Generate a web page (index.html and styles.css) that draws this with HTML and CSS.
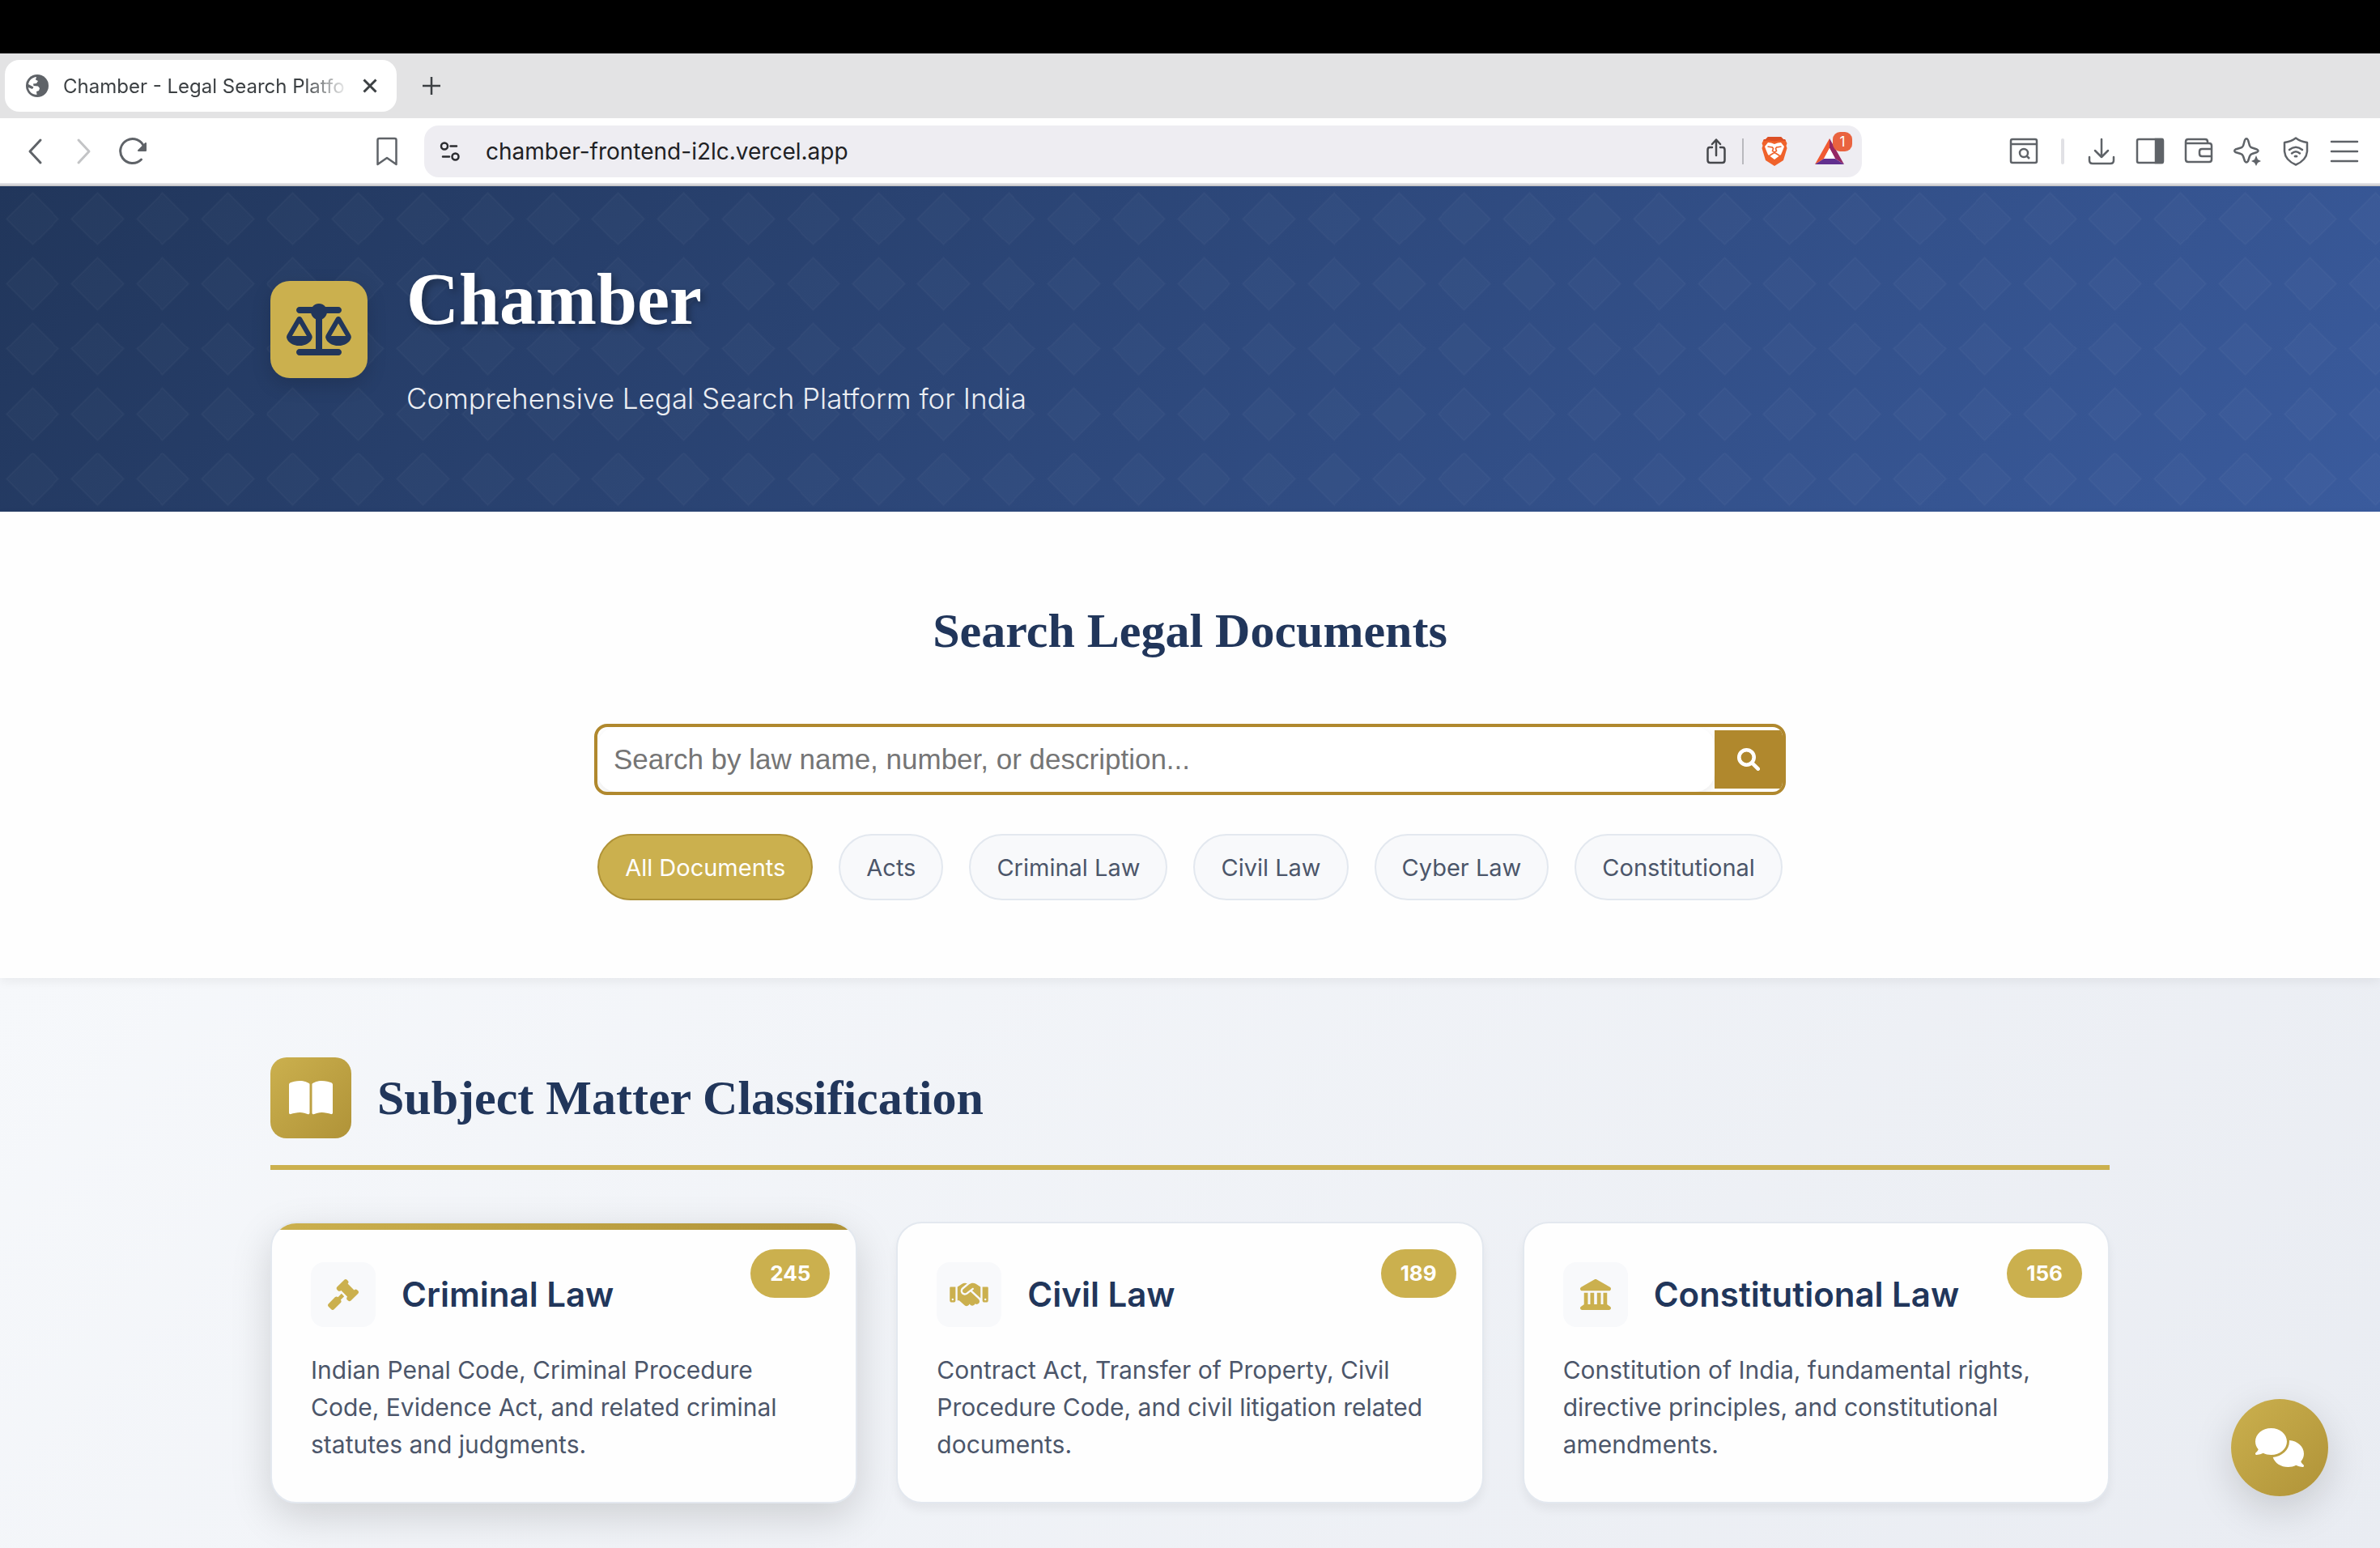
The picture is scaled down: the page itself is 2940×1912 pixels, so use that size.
FILE: index.html
```html
<!DOCTYPE html>
<html lang="en">
<head>
<meta charset="utf-8">
<title>Chamber - Legal Search Platform</title>
<link rel="stylesheet" href="styles.css">
</head>
<body>
<div class="browser">
  <div class="menu-strip"></div>
  <div class="tab-strip">
    <div class="tab">
      <svg class="tab-globe" viewBox="0 0 28 28"><circle cx="14" cy="14" r="14" fill="#5f6368"/><path d="M3 12C4 7 8 3.500 13 3L12 6.500L15 8L13 11L9 11.500L9.500 14L15 14.500L17 17L16 20L13 21L13.500 25C8 25 3.500 21 3 16L8 18L9.500 15.500Z" fill="#fff"/><path d="M18 4C22 6 25 9.500 25 14C25 16 24 19 22 21L21 17.500L18.500 15.500L18 12L21.500 11.500L21 8.500L18 7.500Z" fill="#5f6368"/></svg>
      <span class="tab-title">Chamber - Legal Search Platfo</span>
      <button class="bare tab-close" aria-label="Close tab"><svg viewBox="0 0 18 18" width="18" height="18" fill="none" stroke="#3c4043" stroke-width="3"><path d="M1.500 1.500L16.500 16.500M16.500 1.500L1.500 16.500"/></svg></button>
    </div>
    <button class="bare new-tab" aria-label="New tab"><svg viewBox="0 0 22 22" width="22" height="22" fill="none" stroke="#3c4043" stroke-width="2.500"><path d="M11 0V22M0 11H22"/></svg></button>
  </div>
  <div class="toolbar">
    <div class="nav-tools">
      <button class="bare tool" aria-label="Back"><svg viewBox="0 0 36 36" fill="none" stroke="#5f6368" stroke-width="3" stroke-linecap="round" stroke-linejoin="round"><path d="M24 4L11 18L24 32"/></svg></button>
      <button class="bare tool" aria-label="Forward"><svg viewBox="0 0 36 36" fill="none" stroke="#c3c4c6" stroke-width="3" stroke-linecap="round" stroke-linejoin="round"><path d="M11 4L24 18L11 32"/></svg></button>
      <button class="bare tool" aria-label="Reload"><svg viewBox="0 0 36 36" fill="none" stroke="#5f6368" stroke-width="3" stroke-linecap="round"><path d="M28.500 28A15 15 0 1 1 32 13"/><path d="M34 8V17H25Z" fill="#5f6368" stroke-width="2" stroke-linejoin="round"/></svg></button>
      <button class="bare tool bookmark" aria-label="Bookmark"><svg viewBox="0 0 36 36" fill="none" stroke="#5f6368" stroke-width="2.500" stroke-linejoin="round"><path d="M6.500 34V4Q6.500 2 8.500 2H27.500Q29.500 2 29.500 4V34L18 26Z"/></svg></button>
    </div>
    <div class="address">
      <svg class="tune" viewBox="0 0 26 26" fill="none" stroke="#2b2c30" stroke-width="2.500" stroke-linecap="round"><circle cx="6" cy="6.500" r="4"/><path d="M13.500 6.500H21M4 19.500H12"/><circle cx="19.500" cy="19.500" r="4"/></svg>
      <input class="url" aria-label="Address" value="chamber-frontend-i2lc.vercel.app">
      <button class="bare share" aria-label="Share"><svg viewBox="0 0 24 32" width="24" height="32" fill="none" stroke="#46484c" stroke-width="2.500" stroke-linecap="round" stroke-linejoin="round"><path d="M7 11H4Q1.500 11 1.500 14V27Q1.500 30 4.500 30H19.500Q22.500 30 22.500 27V14Q22.500 11 20 11H17M12 21V2M7 7L12 1.500L17 7"/></svg></button>
      <span class="divider"></span>
      <button class="bare" aria-label="Shields"><svg viewBox="0 0 32 36" width="32" height="36"><path d="M8 0H24L27 3L29 3L31.500 8L30.500 11L31.500 14L27 29L16 36L5 29L.5 14L1.500 11L.5 8L3 3L5 3Z" fill="#f0622b"/><path d="M8 0H24L27 3L29 3L30 5L22 4.500L16 5.500L10 4.500L2 5L3 3L5 3Z" fill="#dc4f25"/><path d="M8 7L12 7.500L16 9L20 7.500L24 7L28 12L26.500 16L24 22L16 28L8 22L5.500 16L4 12Z" fill="#fff"/><path d="M7.500 12L13.500 13L14.500 14.500L13.500 17.500L16 19L18.500 17.500L17.500 14.500L18.500 13L24.500 12M9.500 23.500L12.500 21.500L16 19.500L19.500 21.500L22.500 23.500" fill="none" stroke="#f0622b" stroke-width="1.600"/></svg></button>
      <button class="bare rewards" aria-label="Rewards"><svg viewBox="0 0 36 32" width="36" height="32"><path d="M18 0L0 32L11 25L18 12Z" fill="#f15a33"/><path d="M18 0L36 32L25 25L18 12Z" fill="#952763"/><path d="M0 32H36L25 25H11Z" fill="#62308f"/><path d="M18 12L25 25H11Z" fill="#fff"/></svg><span class="rewards-count">1</span></button>
    </div>
    <div class="side-tools">
      <button class="bare tool" aria-label="Search tabs"><svg viewBox="0 0 36 36" fill="none" stroke="#5f6368" stroke-width="2.500"><rect x="2" y="3" width="32" height="29" rx="2"/><path d="M2 9H34"/><circle cx="18" cy="20" r="5"/><path d="M21.500 23.500L25 27"/></svg></button>
      <span class="tool-divider"></span>
      <button class="bare tool" aria-label="Downloads"><svg viewBox="0 0 36 36" fill="none" stroke="#5f6368" stroke-width="2.500" stroke-linecap="round" stroke-linejoin="round"><path d="M18 3V25M10 17L18 25L26 17M3 25V29Q3 33 7 33H29Q33 33 33 29V25"/></svg></button>
      <button class="bare tool" aria-label="Sidebar"><svg viewBox="0 0 36 36" fill="none" stroke="#5f6368" stroke-width="2.500"><rect x="2" y="3" width="32" height="29" rx="2"/><path d="M25 3H33V32H25Z" fill="#5f6368"/></svg></button>
      <button class="bare tool" aria-label="Wallet"><svg viewBox="0 0 36 36" fill="none" stroke="#5f6368" stroke-width="2.500" stroke-linejoin="round"><path d="M29 8V6Q29 3 26 3H5Q2 3 2 6V28Q2 31 5 31H31Q34 31 34 28V11Q34 8 31 8H2M34 15H22Q19 15 19 18V21Q19 24 22 24H34"/></svg></button>
      <button class="bare tool" aria-label="Assistant"><svg viewBox="0 0 36 36" fill="none" stroke="#5f6368" stroke-width="2.500" stroke-linejoin="round"><path d="M15 4Q17 .5 19 4L21 11Q22 13 24 13.500L30 15.500Q33 17 30 19L24 21Q22 21.500 21 24L19 30Q17 33 15 30L13 24Q12 21.500 10 21L3.500 19Q1 17 3.500 15.500L10 13.500Q12 13 13 11Z"/><path d="M29 23L31 28L35 30L31 32L29 36L27 32L23 30L27 28Z" fill="#5f6368" stroke="none"/></svg></button>
      <button class="bare tool" aria-label="VPN"><svg viewBox="0 0 36 36" fill="none" stroke="#5f6368" stroke-width="2.500" stroke-linejoin="round"><path d="M18 1.500Q24 6 32 7V18Q31 29 18 34.500Q5 29 4 18V7Q12 6 18 1.500Z"/><path d="M10 16Q18 9.500 26 16M13 20.500Q18 16 23 20.500" stroke-linecap="round"/><ellipse cx="18" cy="24" rx="2.500" ry="1.500" fill="#5f6368" stroke="none"/></svg></button>
      <button class="bare tool" aria-label="Menu"><svg viewBox="0 0 36 36" fill="none" stroke="#5f6368" stroke-width="2.500" stroke-linecap="round"><path d="M2 6H34M2 18H34M2 30H34"/></svg></button>
    </div>
  </div>
</div>

<header class="hero">
  <div class="container hero-inner">
    <div class="logo"><svg viewBox="0 0 640 512" width="80" height="64" fill="#21365b"><path d="M384 32l128 0c17.700 0 32 14.300 32 32s-14.300 32-32 32L398.400 96c-5.200 25.800-22.900 47.100-46.400 57.300L352 448l160 0c17.700 0 32 14.300 32 32s-14.300 32-32 32l-192 0-192 0c-17.700 0-32-14.300-32-32s14.300-32 32-32l160 0 0-294.700c-23.500-10.300-41.200-31.600-46.400-57.300L128 96c-17.700 0-32-14.300-32-32s14.300-32 32-32l128 0c14.600-19.400 37.800-32 64-32s49.400 12.600 64 32zm55.600 288l144.900 0L512 195.800 439.600 320zM512 416c-62.900 0-115.200-34-126-78.900c-2.600-11 1-22.300 6.700-32.100l95.200-163.200c5-8.600 14.200-13.800 24.100-13.800s19.100 5.300 24.100 13.800l95.200 163.200c5.700 9.800 9.300 21.100 6.700 32.100C627.200 382 574.900 416 512 416zM126.800 195.800L54.400 320l144.900 0L126.800 195.800zM.9 337.100c-2.600-11 1-22.300 6.700-32.100l95.200-163.200c5-8.600 14.200-13.800 24.100-13.800s19.100 5.300 24.100 13.800l95.200 163.200c5.700 9.800 9.300 21.100 6.700 32.100C242 382 189.700 416 126.800 416S11.700 382 .9 337.100z"/></svg></div>
    <div class="hero-text">
      <h1>Chamber</h1>
      <p>Comprehensive Legal Search Platform for India</p>
    </div>
  </div>
</header>

<section class="search">
  <h2>Search Legal Documents</h2>
  <form class="search-box">
    <input class="search-input" type="text" aria-label="Search" placeholder="Search by law name, number, or description...">
    <button class="search-button" type="button" aria-label="Search"><svg viewBox="-12 -12 536 536" width="28" height="28" fill="#fff" stroke="#fff" stroke-width="24"><path d="M416 208c0 45.900-14.900 88.300-40 122.700L502.600 457.400c12.500 12.500 12.500 32.800 0 45.300s-32.800 12.500-45.300 0L330.700 376c-34.400 25.200-76.800 40-122.700 40C93.100 416 0 322.900 0 208S93.100 0 208 0S416 93.100 416 208zM208 352a144 144 0 1 0 0-288 144 144 0 1 0 0 288z"/></svg></button>
  </form>
  <div class="filters">
    <button class="filter active">All Documents</button>
    <button class="filter">Acts</button>
    <button class="filter">Criminal Law</button>
    <button class="filter">Civil Law</button>
    <button class="filter">Cyber Law</button>
    <button class="filter">Constitutional</button>
  </div>
</section>

<main>
  <div class="container">
    <div class="section-head">
      <div class="section-icon"><svg viewBox="0 0 576 512" width="54" height="48" fill="#fff"><path d="M249.600 471.500c10.800 3.800 22.400-4.100 22.400-15.500l0-377.400c0-4.200-1.600-8.400-5-11C247.400 52 202.400 32 144 32C93.500 32 46.300 45.300 18.100 56.100C6.800 60.500 0 71.700 0 83.800L0 454.100c0 11.900 12.800 20.200 24.100 16.500C55.600 460.100 105.500 448 144 448c33.900 0 79 14 105.600 23.500zm76.800 0C353 462 398.100 448 432 448c38.500 0 88.400 12.100 119.900 22.600c11.300 3.800 24.100-4.600 24.100-16.500l0-370.300c0-12.100-6.800-23.300-18.100-27.600C529.700 45.300 482.500 32 432 32c-58.400 0-103.400 20-123 35.600c-3.300 2.600-5 6.800-5 11L304 456c0 11.400 11.700 19.300 22.400 15.500z"/></svg></div>
      <h2>Subject Matter Classification</h2>
    </div>
    <div class="cards">
      <article class="card raised">
        <span class="count">245</span>
        <div class="card-head">
          <div class="card-icon"><svg viewBox="0 0 512 512" width="38" height="38"><path d="M318.600 9.400c-12.500-12.500-32.800-12.500-45.300 0l-120 120c-12.500 12.500-12.500 32.800 0 45.300l16 16c12.500 12.500 32.800 12.500 45.300 0l4-4L325.400 293.400l-4 4c-12.500 12.500-12.500 32.800 0 45.300l16 16c12.500 12.500 32.800 12.500 45.300 0l120-120c12.500-12.500 12.500-32.800 0-45.300l-16-16c-12.500-12.500-32.800-12.500-45.300 0l-4 4L330.600 74.600l4-4c12.500-12.500 12.500-32.800 0-45.300l-16-16zm-152 288c-12.500-12.500-32.800-12.500-45.300 0l-112 112c-12.500 12.500-12.500 32.800 0 45.300l48 48c12.500 12.500 32.800 12.500 45.300 0l112-112c12.500-12.500 12.500-32.800 0-45.300l-1.400-1.400L272 285.300 226.700 240 168 298.700l-1.400-1.400z"/></svg></div>
          <h3>Criminal Law</h3>
        </div>
        <p>Indian Penal Code, Criminal Procedure Code, Evidence Act, and related criminal statutes and judgments.</p>
      </article>
      <article class="card">
        <span class="count">189</span>
        <div class="card-head">
          <div class="card-icon"><svg viewBox="0 0 640 512" width="48" height="38"><path d="M323.400 85.200l-96.800 78.400c-16.100 13-19.200 36.400-7 53.100c12.900 17.800 38 21.300 55.300 7.800l99.300-77.200c7-5.400 17-4.200 22.500 2.800s4.200 17-2.800 22.500l-20.900 16.200L512 316.800 512 128l-.7 0-3.900-2.500L434.800 79c-15.300-9.800-33.200-15-51.400-15c-21.800 0-43 7.500-60 21.200zm22.800 124.400l-51.700 40.200C263 274.300 217.300 268 193.700 235.600c-22.200-30.500-16.600-73.100 12.700-96.800l83.200-67.300c-11.600-4.900-24.100-7.400-36.800-7.400C234 64 215.700 69.600 200 80l-72 48 0 224 28.200 0 91.400 83.400c19.600 17.900 49.900 16.500 67.800-3.100c5.500-6.100 9.200-13.200 11.100-20.600l17 15.600c19.500 17.900 49.900 16.600 67.800-2.900c4.500-4.900 7.800-10.600 9.900-16.500c19.400 13 45.800 10.300 62.100-7.500c17.900-19.500 16.600-49.900-2.900-67.800l-134.200-123zM16 128c-8.800 0-16 7.200-16 16L0 352c0 17.700 14.300 32 32 32l32 0c17.700 0 32-14.300 32-32l0-224-80 0zM48 320a16 16 0 1 1 0 32 16 16 0 1 1 0-32zM544 128l0 224c0 17.700 14.300 32 32 32l32 0c17.700 0 32-14.300 32-32l0-208c0-8.800-7.200-16-16-16l-80 0zm32 208a16 16 0 1 1 32 0 16 16 0 1 1 -32 0z"/></svg></div>
          <h3>Civil Law</h3>
        </div>
        <p>Contract Act, Transfer of Property, Civil Procedure Code, and civil litigation related documents.</p>
      </article>
      <article class="card">
        <span class="count">156</span>
        <div class="card-head">
          <div class="card-icon"><svg viewBox="0 0 512 512" width="38" height="38"><path d="M240.100 4.200c9.800-5.600 21.900-5.600 31.800 0l171.800 98.100L448 104l0 .9 47.900 27.400c12.600 7.200 18.800 22 15.100 36s-16.400 23.800-30.900 23.800L32 192c-14.500 0-27.200-9.800-30.900-23.800s2.500-28.800 15.100-36L64 104.900l0-.9 4.400-1.600L240.100 4.200zM64 224l64 0 0 192 40 0 0-192 64 0 0 192 48 0 0-192 64 0 0 192 40 0 0-192 64 0 0 196.300c.6 .3 1.200 .7 1.800 1.100l48 32c11.700 7.800 17 22.400 12.900 35.900S494.100 512 480 512L32 512c-14.100 0-26.500-9.200-30.600-22.700s1.100-28.100 12.900-35.900l48-32c.6-.4 1.200-.7 1.800-1.100L64 224z"/></svg></div>
          <h3>Constitutional Law</h3>
        </div>
        <p>Constitution of India, fundamental rights, directive principles, and constitutional amendments.</p>
      </article>
    </div>
  </div>
</main>

<button class="chat" aria-label="Open chat"><svg viewBox="0 0 640 512" width="60" height="48" fill="#fff"><path d="M208 352c114.900 0 208-78.800 208-176S322.900 0 208 0S0 78.800 0 176c0 38.600 14.700 74.300 39.600 103.400c-3.500 9.400-8.700 17.700-14.200 24.700c-4.800 6.200-9.700 11-13.300 14.300c-1.800 1.600-3.300 2.900-4.300 3.700c-.5 .4-.9 .7-1.100 .8l-.2 .2 0 0 0 0C1 327.200-1.400 334.400 .8 340.900S9.100 352 16 352c21.800 0 43.800-5.600 62.100-12.500c9.200-3.500 17.800-7.400 25.300-11.400C134.100 343.300 169.800 352 208 352zM448 176c0 112.300-99.100 196.900-216.500 207C255.800 457.400 336.400 512 432 512c38.200 0 73.900-8.700 104.700-23.900c7.500 4 16 7.900 25.200 11.400c18.300 6.900 40.300 12.500 62.100 12.500c6.900 0 13.100-4.500 15.200-11.100c2.100-6.600-.2-13.800-5.800-17.900l0 0 0 0-.2-.2c-.2-.2-.6-.4-1.100-.8c-1-.8-2.500-2-4.300-3.700c-3.600-3.300-8.500-8.100-13.300-14.300c-5.500-7-10.700-15.400-14.200-24.700c24.900-29 39.600-64.700 39.600-103.400c0-92.800-84.900-168.900-192.600-175.500c.4 5.100 .6 10.300 .6 15.500z"/></svg></button>
</body>
</html>
```
FILE: styles.css
```css
:root {
  --navy: #21365b;
  --gold: #cbb04e;
  --gold-dark: #b09338;
  --bronze: #b0882d;
  --slate: #4c566a;
  --line: #e3e8ef;
  --mist: #f8f9fb;
  --serif: "Liberation Serif", serif;
  --sans: Inter, sans-serif;
}

* { box-sizing: border-box; }

body {
  margin: 0;
  min-height: 100vh;
  display: flex;
  flex-direction: column;
  font-family: var(--sans);
  color: var(--slate);
}

h1, h2, h3, p { margin: 0; }
svg { display: block; flex: none; }
button, input { font-family: inherit; }

.bare {
  padding: 0;
  border: 0;
  background: none;
  flex: none;
}

/* Browser frame */
.menu-strip { height: 66px; background: #000; }

.tab-strip {
  height: 80px;
  padding: 8px 6px;
  display: flex;
  align-items: center;
  gap: 32px;
  background: #e3e3e4;
}

.tab {
  width: 484px;
  height: 64px;
  padding: 0 24px 0 26px;
  display: flex;
  align-items: center;
  border-radius: 18px;
  background: #fff;
}

.tab-globe { width: 28px; height: 28px; }

.tab-title {
  flex: 1;
  margin: 0 16px 0 18px;
  white-space: nowrap;
  font-size: 24px;
  color: #3c4043;
  -webkit-mask-image: linear-gradient(90deg, #000 84%, transparent);
  mask-image: linear-gradient(90deg, #000 84%, transparent);
}

.toolbar {
  height: 84px;
  display: grid;
  grid-template-columns: 524px 1fr 640px;
  align-items: center;
  background: #fff;
  border-bottom: 2px solid #c9c9cb;
  box-shadow: inset 0 -2px #e1e1e5;
}

.nav-tools, .side-tools { display: flex; align-items: center; }
.nav-tools { padding-left: 14px; }
.side-tools { padding-right: 14px; justify-content: flex-end; }

.tool { width: 60px; display: flex; justify-content: center; }
.tool svg { width: 36px; height: 36px; }
.bookmark { margin-left: auto; margin-right: 16px; }
.tool-divider { width: 4px; height: 32px; margin: 0 16px; border-radius: 2px; background: #e1e1e5; }

.address {
  height: 64px;
  padding: 0 22px 0 19px;
  display: flex;
  align-items: center;
  border-radius: 18px;
  background: #eeedf2;
}

.tune { width: 26px; height: 26px; }

.url {
  flex: 1;
  min-width: 0;
  margin-left: 31px;
  padding: 0;
  border: 0;
  background: none;
  font-size: 28px;
  color: #202124;
}

.divider { width: 2px; height: 32px; margin: 0 22px 0 20px; background: #b9b9be; }

.rewards { position: relative; margin-left: 34px; }

.rewards-count {
  position: absolute;
  top: -8px;
  right: -10px;
  width: 24px;
  height: 24px;
  border-radius: 9px;
  background: #e9633f;
  color: #fff;
  font-size: 17px;
  line-height: 24px;
}

/* Hero */
.container {
  width: 100%;
  max-width: 2400px;
  margin: 0 auto;
  padding: 0 64px;
}

.hero {
  padding: 63px 0 111px;
  background:
    url("data:image/svg+xml,%3Csvg xmlns='http://www.w3.org/2000/svg' viewBox='0 0 20 20'%3E%3Cpath d='M10 2L18 10L10 18L2 10Z' fill='%23fff' fill-opacity='.018' stroke='%23fff' stroke-opacity='.018' stroke-width='.5'/%3E%3C/svg%3E") 0 0 / auto 20%,
    linear-gradient(135deg, #21365b, #3a5b9d);
}

.hero-inner { display: flex; align-items: center; gap: 48px; }

.logo {
  width: 120px;
  height: 120px;
  display: grid;
  place-items: center;
  border-radius: 24px;
  background: var(--gold);
  box-shadow: 0 8px 24px rgba(0, 0, 0, 0.15);
}

.hero-text { display: flex; flex-direction: column; gap: 16px; }

h1 {
  font-family: var(--serif);
  font-size: 90px;
  line-height: 154px;
  color: #fff;
  text-shadow: 4px 4px 8px rgba(0, 0, 0, 0.3);
}

.hero-text p {
  font-size: 35px;
  line-height: 58px;
  font-weight: 300;
  color: #ebeef3;
}

h2 {
  font-family: var(--serif);
  font-size: 60px;
  line-height: 102px;
  color: var(--navy);
}

/* Search */
.search {
  position: relative;
  padding: 96px 64px;
  display: flex;
  flex-direction: column;
  align-items: center;
  background: #fefefe;
  box-shadow: 0 4px 12px rgba(0, 0, 0, 0.06);
}

.search-box {
  width: 100%;
  max-width: 1472px;
  height: 88px;
  margin: 64px 0 48px;
  display: flex;
  align-items: center;
  border: 4px solid var(--bronze);
  border-radius: 16px;
  background: #fff;
  overflow: hidden;
}

.search-input {
  flex: 1;
  min-width: 0;
  height: 100%;
  padding: 0 20px;
  border: 0;
  border-radius: 24px;
  background: #fff;
  box-shadow: 0 4px 12px rgba(0, 0, 0, 0.08);
  font-family: "Liberation Sans", sans-serif;
  font-size: 35px;
}

.search-input::placeholder { color: #757575; opacity: 1; }

.search-button {
  width: 84px;
  height: 72px;
  padding: 0;
  display: grid;
  place-items: center;
  border: 0;
  background: var(--bronze);
}

.filters { display: flex; flex-wrap: wrap; justify-content: center; gap: 32px; }

.filter {
  height: 82px;
  padding: 0 32px;
  border: 2px solid var(--line);
  border-radius: 41px;
  background: var(--mist);
  font-size: 29px;
  color: var(--slate);
}

.filter.active {
  border-color: var(--gold-dark);
  background: var(--gold);
  color: #fff;
}

/* Subjects */
main {
  flex: 1;
  padding: 97px 0 50px;
  background: linear-gradient(135deg, #f6f8fb, #e9ecf2);
}

.section-head {
  display: flex;
  align-items: center;
  gap: 32px;
  padding-bottom: 32px;
  margin-bottom: 64px;
  border-bottom: 6px solid var(--gold);
}

.section-icon {
  width: 100px;
  height: 100px;
  display: grid;
  place-items: center;
  border-radius: 20px;
  background: linear-gradient(135deg, var(--gold), var(--gold-dark));
}

.cards {
  display: grid;
  grid-template-columns: repeat(3, 1fr);
  gap: 48px;
}

.card {
  position: relative;
  padding: 48px;
  border: 2px solid var(--line);
  border-radius: 32px;
  background: #fefefe;
  box-shadow: 0 8px 12px rgba(0, 0, 0, 0.05);
  overflow: hidden;
}

.card.raised { box-shadow: 0 16px 50px rgba(0, 0, 0, 0.15); }

.card.raised::before {
  content: "";
  position: absolute;
  top: 0;
  left: 0;
  right: 0;
  height: 8px;
  background: linear-gradient(90deg, var(--gold), var(--gold-dark));
}

.count {
  position: absolute;
  top: 32px;
  right: 32px;
  padding: 0 24px;
  border-radius: 30px;
  background: var(--gold);
  font-size: 26px;
  line-height: 60px;
  font-weight: 700;
  color: #fff;
}

.card-head {
  display: flex;
  align-items: center;
  gap: 32px;
  margin-bottom: 30px;
}

.card-icon {
  width: 80px;
  height: 80px;
  display: grid;
  place-items: center;
  border-radius: 16px;
  background: var(--mist);
}

.card-icon svg { fill: var(--gold); }

h3 {
  font-size: 42px;
  line-height: 66px;
  font-weight: 600;
  color: var(--navy);
}

.card p { font-size: 30px; line-height: 46px; }

.chat {
  position: fixed;
  right: 64px;
  bottom: 64px;
  width: 120px;
  height: 120px;
  padding: 0;
  display: grid;
  place-items: center;
  border: 0;
  border-radius: 50%;
  background: linear-gradient(135deg, var(--gold), var(--gold-dark));
  box-shadow: 0 16px 50px rgba(0, 0, 0, 0.15);
}
```
